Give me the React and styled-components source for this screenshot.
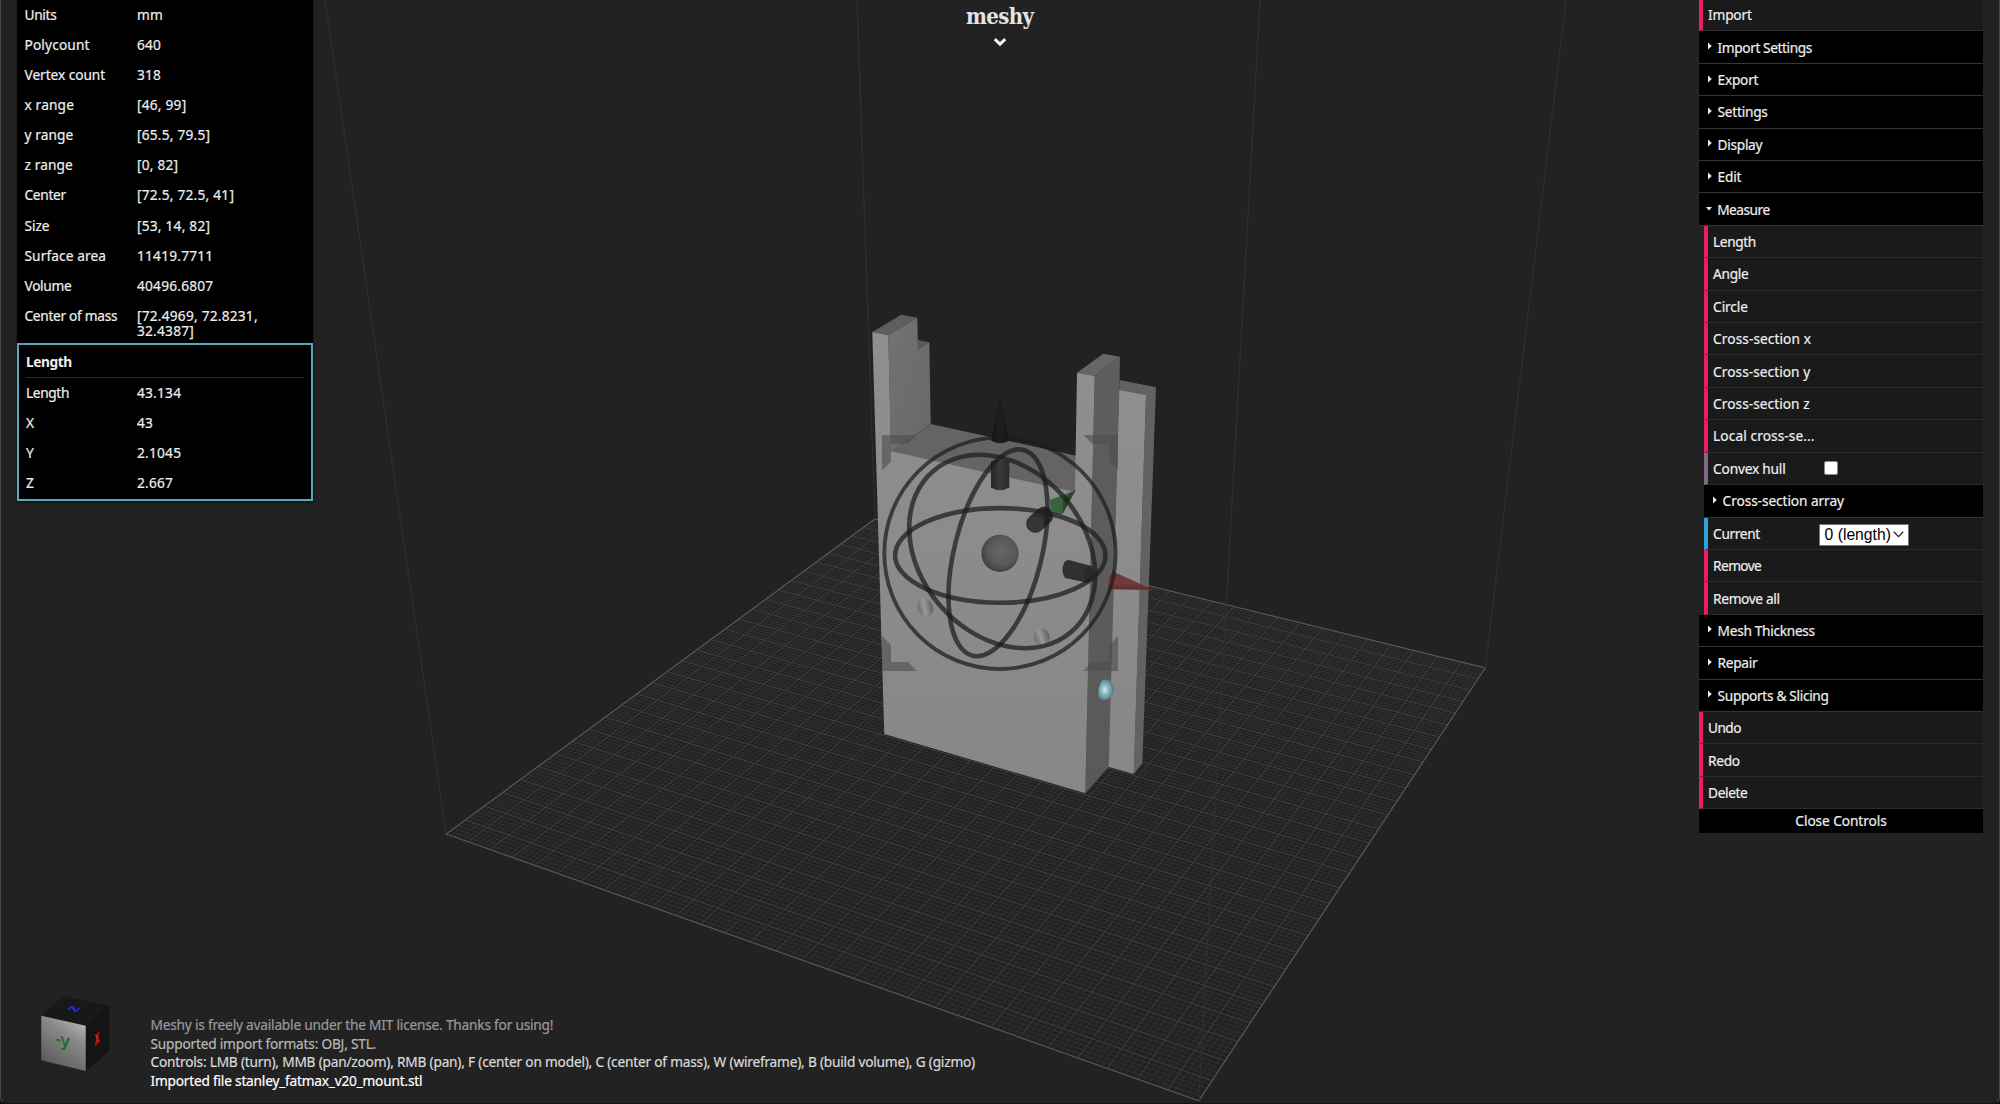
import React from "react";
import styled, { createGlobalStyle } from "styled-components";

const GlobalStyle = createGlobalStyle`
  * { box-sizing: border-box; }
  html, body { margin: 0; padding: 0; background: #222; }
  body { overflow: hidden; }
`;

const UI_FONT = `"Lucida Grande", "Noto Sans", "Open Sans", sans-serif`;

/* ---------- page ---------- */

const Page = styled.div`
  position: relative;
  width: 2000px;
  height: 1104px;
  overflow: hidden;
  background: #222222;
  color: #eee;
  font-family: ${UI_FONT};
  font-size: 13.7px;
  letter-spacing: 0.2px;
  -webkit-text-stroke: 0.2px currentColor;
`;

const Viewport = styled.svg`
  position: absolute;
  inset: 0;
  display: block;
`;

const Overlay = styled.div`
  position: relative;
  display: flex;
  flex-direction: column;
  justify-content: space-between;
  height: 100%;
`;

const TopRow = styled.div`
  display: grid;
  grid-template-columns: 295.5px 1fr 284px;
  align-items: start;
  padding: 0 17px 0 17px;
`;

const WindowEdge = styled.div`
  position: absolute;
  inset: -10px 0 0 0;
  border: 1px solid #4a4a4a;
  border-bottom-color: #151515;
  border-radius: 0 0 7px 7px;
  box-shadow: 0 0 0 8px #111;
  pointer-events: none;
`;

/* ---------- info panel ---------- */

const InfoPanel = styled.section`
  background: #000;
  box-shadow: 0 1px 2px 1px rgba(0, 0, 0, 0.35);
`;

const InfoList = styled.dl`
  margin: 0;
  padding: 0 7.5px;
  height: 343px;
`;

const InfoRow = styled.div`
  display: grid;
  grid-template-columns: ${(p) => p.$label}px 1fr;
  height: 30.15px;
  padding-top: 6.6px;
  line-height: 15.2px;
`;

const InfoLabel = styled.dt`
  white-space: nowrap;
  letter-spacing: ${(p) => p.$track ?? 0.2}px;
`;

const InfoValue = styled.dd`
  margin: 0;
  padding-right: 40px;
  letter-spacing: 0.23px;
`;

const MeasureBox = styled.section`
  height: 158px;
  padding: 0 7px;
  border: 2px solid #5aa6c0;
`;

const MeasureTitle = styled.h2`
  margin: 0;
  height: 33px;
  padding-top: 7.5px;
  border-bottom: 1px solid #2c2c2c;
  font-size: 13.7px;
  line-height: 17px;
  font-weight: 700;
  letter-spacing: -0.4px;
  -webkit-text-stroke: 0;
`;

/* ---------- logo ---------- */

const Brand = styled.header`
  display: flex;
  flex-direction: column;
  align-items: center;
  margin-right: 12px;
`;

const BrandName = styled.div`
  height: 35px;
  font-family: "DejaVu Serif Condensed", "DejaVu Serif", serif;
  font-stretch: condensed;
  font-weight: 700;
  font-size: 22px;
  line-height: 32px;
  letter-spacing: -0.6px;
  color: #e4e4e4;
  -webkit-text-stroke: 0;
`;

const Chevron = styled.svg`
  display: block;
  margin-top: 2px;
`;

/* ---------- control panel ---------- */

const Controls = styled.nav`
  display: flex;
  flex-direction: column;
  margin-top: -1px;
`;

const ACCENTS = { fn: "#ec1c60", bool: "#806787", option: "#2fa1d6" };

const ControlRow = styled.div`
  display: flex;
  align-items: center;
  height: 32.42px;
  margin-left: ${(p) => (p.$nested ? 5 : 0)}px;
  padding: 0 0 0 5.1px;
  border-left: 4px solid ${(p) => ACCENTS[p.$kind]};
  border-bottom: 1px solid #2c2c2c;
  background: #1a1a1a;
`;

const FolderRow = styled.div`
  display: flex;
  align-items: center;
  gap: ${(p) => (p.$open ? 5 : 6)}px;
  height: 32.42px;
  margin-left: ${(p) => (p.$nested ? 5 : 0)}px;
  padding: 0 0 0 ${(p) => (p.$open ? 7.2 : 8.6)}px;
  border-bottom: 1px solid #363636;
  background: #000;
`;

const ControlLabel = styled.span`
  width: 106px;
  white-space: nowrap;
  letter-spacing: ${(p) => p.$track ?? 0}px;
`;

const FolderLabel = styled.span`
  white-space: nowrap;
  letter-spacing: ${(p) => p.$track ?? 0}px;
`;

const Checkbox = styled.span`
  width: 14px;
  height: 14px;
  margin-left: 4.5px;
  border: 1px solid #8a8a8a;
  border-radius: 2px;
  background: #fff;
`;

const Select = styled.span`
  display: flex;
  align-items: center;
  justify-content: space-between;
  width: 90px;
  height: 22px;
  margin-top: 3px;
  padding: 0 4px 0 4.5px;
  border: 1px solid #777;
  border-radius: 1px;
  background: #fff;
  color: #000;
  font-family: "Liberation Sans", Arial, sans-serif;
  font-size: 15.7px;
  letter-spacing: 0;
  white-space: nowrap;
  -webkit-text-stroke: 0;
`;

const CloseButton = styled.div`
  height: 23.4px;
  background: #000;
  line-height: 23px;
  letter-spacing: -0.08px;
  text-align: center;
`;

/* ---------- footer ---------- */

const Footer = styled.footer`
  display: flex;
  align-items: flex-end;
  gap: 32.5px;
  padding: 0 0 13.5px 36px;
`;

const CubeView = styled.svg`
  display: block;
  margin-bottom: 16px;
`;

const Log = styled.div`
  line-height: 18.55px;
  letter-spacing: -0.21px;
`;

const LogLine = styled.div`
  color: ${(p) => p.$tone};
`;

/* ---------- data ---------- */

const INFO = [
  ["Units", "mm", -0.3],
  ["Polycount", "640", 0.15],
  ["Vertex count", "318", -0.05],
  ["x range", "[46, 99]", 0.15],
  ["y range", "[65.5, 79.5]", 0.1],
  ["z range", "[0, 82]", 0.1],
  ["Center", "[72.5, 72.5, 41]", -0.3],
  ["Size", "[53, 14, 82]", -0.05],
  ["Surface area", "11419.7711", 0.1],
  ["Volume", "40496.6807", -0.3],
  ["Center of mass", "[72.4969, 72.8231, 32.4387]", -0.3],
];

const LENGTH = [
  ["Length", "43.134", -0.35],
  ["X", "43"],
  ["Y", "2.1045"],
  ["Z", "2.667"],
];

const CONTROLS = [
  { kind: "fn", label: "Import", track: -0.2 },
  { kind: "folder", label: "Import Settings", track: -0.4 },
  { kind: "folder", label: "Export", track: -0.25 },
  { kind: "folder", label: "Settings", track: -0.25 },
  { kind: "folder", label: "Display", track: -0.3 },
  { kind: "folder", label: "Edit", track: -0.2 },
  { kind: "folder", label: "Measure", open: true, track: -0.5 },
  { kind: "fn", label: "Length", nested: true, track: -0.4 },
  { kind: "fn", label: "Angle", nested: true, track: -0.3 },
  { kind: "fn", label: "Circle", nested: true, track: -0.1 },
  { kind: "fn", label: "Cross-section x", nested: true, track: 0.08 },
  { kind: "fn", label: "Cross-section y", nested: true, track: 0.05 },
  { kind: "fn", label: "Cross-section z", nested: true, track: 0.05 },
  { kind: "fn", label: "Local cross-se...", nested: true, track: 0.1 },
  { kind: "bool", label: "Convex hull", nested: true, track: -0.2 },
  { kind: "folder", label: "Cross-section array", nested: true, track: -0.08 },
  { kind: "option", label: "Current", value: "0 (length)", nested: true, track: -0.35 },
  { kind: "fn", label: "Remove", nested: true, track: -0.6 },
  { kind: "fn", label: "Remove all", nested: true, track: -0.35 },
  { kind: "folder", label: "Mesh Thickness", track: -0.3 },
  { kind: "folder", label: "Repair", track: -0.3 },
  { kind: "folder", label: "Supports & Slicing", track: -0.33 },
  { kind: "fn", label: "Undo", track: -0.6 },
  { kind: "fn", label: "Redo", track: -0.3 },
  { kind: "fn", label: "Delete", track: -0.38 },
];

const LOG = [
  ["#999999", "Meshy is freely available under the MIT license. Thanks for using!"],
  ["#b8b8b8", "Supported import formats: OBJ, STL."],
  ["#dadada", "Controls: LMB (turn), MMB (pan/zoom), RMB (pan), F (center on model), C (center of mass), W (wireframe), B (build volume), G (gizmo)"],
  ["#ffffff", "Imported file stanley_fatmax_v20_mount.stl"],
];

/* ---------- build plate ---------- */

const PLATE = 145;
const CORNERS = [[446.2, 834], [1198.7, 1100.8], [1485.2, 668], [875, 519]];

// Projective map from the unit square to the four plate corners.
function projector([p0, p1, p2, p3]) {
  const dx1 = p1[0] - p2[0], dx2 = p3[0] - p2[0], sx = p0[0] - p1[0] + p2[0] - p3[0];
  const dy1 = p1[1] - p2[1], dy2 = p3[1] - p2[1], sy = p0[1] - p1[1] + p2[1] - p3[1];
  const det = dx1 * dy2 - dx2 * dy1;
  const g = (sx * dy2 - dx2 * sy) / det;
  const h = (dx1 * sy - sx * dy1) / det;
  const a = p1[0] - p0[0] + g * p1[0], b = p3[0] - p0[0] + h * p3[0];
  const d = p1[1] - p0[1] + g * p1[1], e = p3[1] - p0[1] + h * p3[1];
  return (u, v) => {
    const w = g * u + h * v + 1;
    return `${((a * u + b * v + p0[0]) / w).toFixed(2)} ${((d * u + e * v + p0[1]) / w).toFixed(2)}`;
  };
}

function gridPaths() {
  const at = projector(CORNERS);
  let minor = "", major = "";
  for (let i = 1; i < PLATE; i++) {
    const t = i / PLATE;
    const seg = `M${at(t, 0)}L${at(t, 1)}M${at(0, t)}L${at(1, t)}`;
    if (i % 5 === 0) major += seg;
    else minor += seg;
  }
  return { minor, major };
}

const GRID = gridPaths();

function Plate() {
  return (
    <g fill="none">
      <path d={GRID.minor} stroke="#313131" strokeWidth="0.9" />
      <path d={GRID.major} stroke="#404040" strokeWidth="1" />
      <path d={`M${CORNERS.map((c) => c.join(" ")).join("L")}Z`} stroke="#585858" strokeWidth="1.2" />
      <path d="M325 0L446.2 834M857 0L875 519M1566 0L1485.2 668M1260 0L1198.7 1100.8" stroke="#303030" strokeWidth="1.2" />
    </g>
  );
}

function Model() {
  return (
    <g>
      <polygon points="872.3,332 901.3,314.7 917.3,317.7 888.3,335.3" fill="#5e5e5e" />
      <polygon points="918,340 929.3,342.3 918,349.3" fill="#5a5a5a" />
      <polygon points="888.3,335.3 917.3,317.7 918,349.3 929.3,342.3 930.7,424 891,452" fill="url(#inner)" />
      <polygon points="930.7,424 1076,455.7 1076,493 891,452" fill="#646464" />
      <polygon points="1119.5,380 1156,387.3 1142.3,763.3 1133.7,774 1146,395 1119.3,391" fill="#626262" />
      <polygon points="1119,390 1146,395 1133.7,774 1108,766.7" fill="url(#front)" />
      <polygon points="1077,372.7 1103.3,353.7 1120,356.7 1094.7,376" fill="#666" />
      <polygon points="1094.7,376 1120,356.7 1119.3,391 1108.7,766.7 1085.3,793.3" fill="url(#side)" />
      <polygon points="872.3,332 888.3,335.3 891,451.3 1075,492 1077,372.7 1094.7,376 1085.3,793.3 884.3,734" fill="url(#front)" />
      <ellipse cx="925.3" cy="607.7" rx="7.8" ry="9.6" transform="rotate(-25 925.3 607.7)" fill="url(#hole)" />
      <ellipse cx="1041.7" cy="637" rx="7.8" ry="8.6" transform="rotate(-35 1041.7 637)" fill="url(#hole)" />
    </g>
  );
}

function Gizmo() {
  return (
    <g>
      <g fill="#4c4c4c" fillOpacity="0.6">
        <path d="M882 435H916.7L908 443.7H891V461.7L882 470.5Z" />
        <path d="M1118 435H1083.3L1092 443.7H1109V461.7L1118 470.5Z" />
        <path d="M882 671H916.7L908 662H891V645L882 636Z" />
        <path d="M1118 671H1083.3L1092 662H1109V645L1118 636Z" />
      </g>
      <path d="M991 461.5Q1000 458.5 1009.3 461.5V487.5Q1000 493 991 487.5Z" fill="url(#shaft)" />
      <path d="M1000 396L1009.3 440.5Q1000 446 991 440.5Z" fill="url(#cone)" />
      <path d="M1035.2 523.8L1044.2 515.8" stroke="#2b2b2b" strokeWidth="18" strokeLinecap="round" />
      <ellipse cx="1035.5" cy="524" rx="8.5" ry="8" fill="#363636" />
      <path d="M1075.7 490L1050 500L1050.7 511Q1056 515.5 1062.7 513.7Z" fill="#39633a" />
      <path d="M1075.7 490L1063 498.5L1062.7 513.7Z" fill="#2b472b" />
      <path d="M1068.7 560L1091.7 566Q1093 576 1087.3 582.7L1065 578Q1060 570 1064.5 562Q1066 560 1068.7 560Z" fill="#303030" />
      <ellipse cx="1088.5" cy="574.4" rx="4.5" ry="8.6" transform="rotate(14 1088.5 574.4)" fill="#292929" />
      <path d="M1154 590L1113.3 571.7Q1106 576 1108.7 589.3Z" fill="url(#red)" />
      <g fill="none" stroke="#1c1c1c" strokeOpacity="0.72">
        <circle cx="1000" cy="553.3" r="115.7" strokeWidth="3.8" />
        <ellipse cx="1000.3" cy="555.4" rx="105.2" ry="47.3" strokeWidth="4.6" />
        <ellipse cx="998" cy="552.8" rx="43.7" ry="106" transform="rotate(13.9 998 552.8)" strokeWidth="4.6" />
        <ellipse cx="1002.2" cy="551.5" rx="106" ry="82.3" transform="rotate(49.5 1002.2 551.5)" strokeWidth="4.6" />
      </g>
      <circle cx="1000" cy="553.4" r="18.6" fill="url(#ball)" />
      <path d="M1102 680.6Q1106 678.6 1109.6 680.7Q1114 684 1113.9 690Q1113.2 696.5 1107.5 699.3Q1102 700.8 1098.6 697.8Q1097.2 688 1102 680.6Z" fill="url(#marker)" />
    </g>
  );
}

function Gradients() {
  return (
    <defs>
      <linearGradient id="front" x1="0" y1="0" x2="0" y2="1">
        <stop offset="0" stopColor="#8f8f8f" />
        <stop offset="1" stopColor="#878787" />
      </linearGradient>
      <linearGradient id="side" x1="0" y1="0" x2="0" y2="1">
        <stop offset="0" stopColor="#5e5e5e" />
        <stop offset="1" stopColor="#595959" />
      </linearGradient>
      <linearGradient id="inner" x1="0" y1="0" x2="1" y2="1">
        <stop offset="0" stopColor="#727272" />
        <stop offset="1" stopColor="#686868" />
      </linearGradient>
      <linearGradient id="hole" x1="0" y1="0" x2="1" y2="0.3">
        <stop offset="0" stopColor="#6c6c6c" />
        <stop offset="0.25" stopColor="#787878" />
        <stop offset="0.55" stopColor="#999" />
        <stop offset="0.8" stopColor="#7c7c7c" />
        <stop offset="1" stopColor="#666" />
      </linearGradient>
      <linearGradient id="shaft" x1="0" y1="0" x2="1" y2="0">
        <stop offset="0" stopColor="#262626" />
        <stop offset="0.5" stopColor="#3a3a3a" />
        <stop offset="1" stopColor="#2a2a2a" />
      </linearGradient>
      <linearGradient id="cone" x1="0" y1="0" x2="1" y2="0">
        <stop offset="0" stopColor="#131313" />
        <stop offset="0.5" stopColor="#1e1e1e" />
        <stop offset="1" stopColor="#131313" />
      </linearGradient>
      <linearGradient id="red" x1="0" y1="0" x2="0" y2="1">
        <stop offset="0" stopColor="#603232" />
        <stop offset="0.6" stopColor="#743b3b" />
        <stop offset="1" stopColor="#5c2c2c" />
      </linearGradient>
      <radialGradient id="ball" cx="0.55" cy="0.45" r="0.6">
        <stop offset="0" stopColor="#666" />
        <stop offset="0.6" stopColor="#595959" />
        <stop offset="1" stopColor="#3c3c3c" />
      </radialGradient>
      <radialGradient id="marker" cx="0.42" cy="0.5" r="0.62">
        <stop offset="0" stopColor="#d5edf3" />
        <stop offset="0.35" stopColor="#8fbcc8" />
        <stop offset="1" stopColor="#46707b" />
      </radialGradient>
    </defs>
  );
}

function ViewCube() {
  return (
    <CubeView width="82" height="82" viewBox="36 992 82 82">
      <defs>
        <linearGradient id="cubeFront" x1="0.9" y1="0.1" x2="0.4" y2="1">
          <stop offset="0" stopColor="#b4b4b4" />
          <stop offset="0.35" stopColor="#8a8a8a" />
          <stop offset="1" stopColor="#5c5c5c" />
        </linearGradient>
      </defs>
      <polygon points="41.3,1014.7 63.3,994.7 109.3,1005 85.7,1024.7" fill="#181818" />
      <polygon points="85.7,1024.7 109.3,1005 109.3,1050.3 85.7,1070" fill="#141414" />
      <polygon points="41.3,1014.7 85.7,1024.7 85.7,1070 41.3,1059.3" fill="url(#cubeFront)" />
      <g fontFamily="Liberation Sans, Arial, sans-serif" textAnchor="middle" letterSpacing="0">
        <text fontSize="18" fontWeight="400" stroke="#1f6a25" strokeWidth="0.5" fill="#1f6a25" transform="matrix(0.97 0.22 0 1 62.3 1045)">-y</text>
        <text fontSize="17" fontWeight="700" fill="#2b2bd8" transform="matrix(0.62 -0.56 0.98 0.3 78.5 1009)">z</text>
        <text fontSize="21" fontWeight="700" fill="#e02424" transform="matrix(0.4 -0.34 0 1 97 1043)">x</text>
      </g>
    </CubeView>
  );
}

/* ---------- panels ---------- */

function Folder({ label, open, nested, track }) {
  return (
    <FolderRow $open={open} $nested={nested}>
      {open ? (
        <svg width="6" height="4" viewBox="0 0 6 4"><path d="M0 0H6L3 3.6Z" fill="#eee" /></svg>
      ) : (
        <svg width="4" height="10" viewBox="0 0 4 10"><path d="M0 0.5L3.8 4L0 7.5Z" fill="#eee" /></svg>
      )}
      <FolderLabel $track={track}>{label}</FolderLabel>
    </FolderRow>
  );
}

function Control({ item }) {
  if (item.kind === "folder") return <Folder {...item} />;
  return (
    <ControlRow $kind={item.kind} $nested={item.nested}>
      <ControlLabel $track={item.track}>{item.label}</ControlLabel>
      {item.kind === "bool" && <Checkbox />}
      {item.kind === "option" && (
        <Select>
          {item.value}
          <svg width="11" height="7" viewBox="0 0 11 7">
            <path d="M0.8 0.8L5.5 5.6L10.2 0.8" fill="none" stroke="#222" strokeWidth="1.3" />
          </svg>
        </Select>
      )}
    </ControlRow>
  );
}

function Rows({ rows, label }) {
  return rows.map(([name, value, track]) => (
    <InfoRow key={name} $label={label}>
      <InfoLabel $track={track}>{name}</InfoLabel>
      <InfoValue>{value}</InfoValue>
    </InfoRow>
  ));
}

export default function App() {
  return (
    <Page>
      <GlobalStyle />
      <Viewport width="2000" height="1104" viewBox="0 0 2000 1104">
        <Gradients />
        <Plate />
        <Model />
        <Gizmo />
      </Viewport>
      <Overlay>
        <TopRow>
          <InfoPanel>
            <InfoList><Rows rows={INFO} label={112.5} /></InfoList>
            <MeasureBox>
              <MeasureTitle>Length</MeasureTitle>
              <Rows rows={LENGTH} label={111} />
            </MeasureBox>
          </InfoPanel>
          <Brand>
            <BrandName>meshy</BrandName>
            <Chevron width="14" height="10" viewBox="0 0 14 10">
              <path d="M1.8 2.2L7 7.2L12.2 2.2" fill="none" stroke="#f0f0f0" strokeWidth="3" />
            </Chevron>
          </Brand>
          <Controls>
            {CONTROLS.map((item) => <Control key={item.label + (item.nested ? "-n" : "")} item={item} />)}
            <CloseButton>Close Controls</CloseButton>
          </Controls>
        </TopRow>
        <Footer>
          <ViewCube />
          <Log>
            {LOG.map(([tone, text]) => <LogLine key={text} $tone={tone}>{text}</LogLine>)}
          </Log>
        </Footer>
      </Overlay>
      <WindowEdge />
    </Page>
  );
}
